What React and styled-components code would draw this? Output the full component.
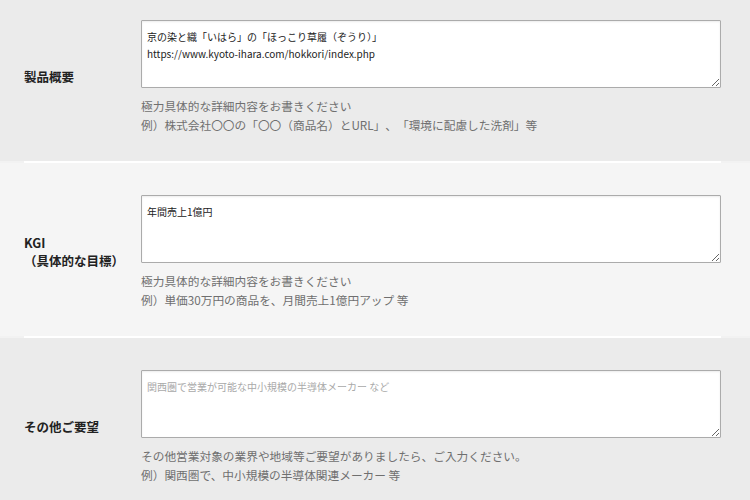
import React from "react";
import styled, { createGlobalStyle } from "styled-components";

const GlobalStyle = createGlobalStyle`
  html, body { margin: 0; padding: 0; background: #ebebeb; }
  body {
    font-family: "Noto Sans CJK JP", "Noto Sans", sans-serif;
  }
  * { box-sizing: border-box; }
`;

const Form = styled.div`
  width: 750px;
  background: #f2f2f2;
`;

const Row = styled.div`
  display: grid;
  grid-template-columns: 117px 1fr;
  align-items: center;
  padding: ${(p) => (p.$first ? "20px" : "32px")} 29px 27px 24px;
  background: ${(p) => (p.$light ? "#f5f5f5" : "#ebebeb")};
`;

const Divider = styled.div`
  height: 2px;
  margin: 0 29px 0 24px;
  background: #ffffff;
`;

const Label = styled.div`
  font-size: 12.5px;
  font-weight: 700;
  line-height: 18px;
  color: #222;
`;

const Field = styled.div`
  display: flex;
  flex-direction: column;
`;

const TextArea = styled.textarea`
  display: block;
  width: 580px;
  height: 68px;
  margin: 0;
  padding: 7px 5px;
  border: 1px solid #ababab;
  border-radius: 1px;
  box-shadow: inset 0 1px 2px rgba(0, 0, 0, 0.08);
  background: #fff;
  font-family: "Noto Sans CJK JP", "Noto Sans", sans-serif;
  font-size: 10px;
  line-height: 17px;
  color: #222;
  resize: vertical;
  outline: none;
  &::placeholder { color: #a9a9a9; }
`;

const Help = styled.p`
  margin: 8px 0 0;
  font-size: 11.7px;
  line-height: 19px;
  color: #6f6f6f;
  text-spacing-trim: space-all;
`;

const rows = [
  {
    label: ["製品概要"],
    value: "京の染と織「いはら」の「ほっこり草履（ぞうり）」\nhttps://www.kyoto-ihara.com/hokkori/index.php",
    help: ["極力具体的な詳細内容をお書きください", "例）株式会社〇〇の「〇〇（商品名）とURL」、「環境に配慮した洗剤」等"],
  },
  {
    label: ["KGI", "（具体的な目標）"],
    value: "年間売上1億円",
    help: ["極力具体的な詳細内容をお書きください", "例）単価30万円の商品を、月間売上1億円アップ 等"],
    light: true,
  },
  {
    label: ["その他ご要望"],
    value: "",
    placeholder: "関西圏で営業が可能な中小規模の半導体メーカー など",
    help: ["その他営業対象の業界や地域等ご要望がありましたら、ご入力ください。", "例）関西圏で、中小規模の半導体関連メーカー 等"],
  },
];

export default function App() {
  return (
    <>
      <GlobalStyle />
      <Form>
        {rows.map((r, i) => (
          <React.Fragment key={i}>
            {i > 0 && <Divider />}
            <Row $first={i === 0} $light={r.light}>
              <Label>
                {r.label.map((l, j) => (
                  <div key={j}>{l}</div>
                ))}
              </Label>
              <Field>
                <TextArea defaultValue={r.value} placeholder={r.placeholder} />
                <Help>
                  {r.help[0]}
                  <br />
                  {r.help[1]}
                </Help>
              </Field>
            </Row>
          </React.Fragment>
        ))}
      </Form>
    </>
  );
}
